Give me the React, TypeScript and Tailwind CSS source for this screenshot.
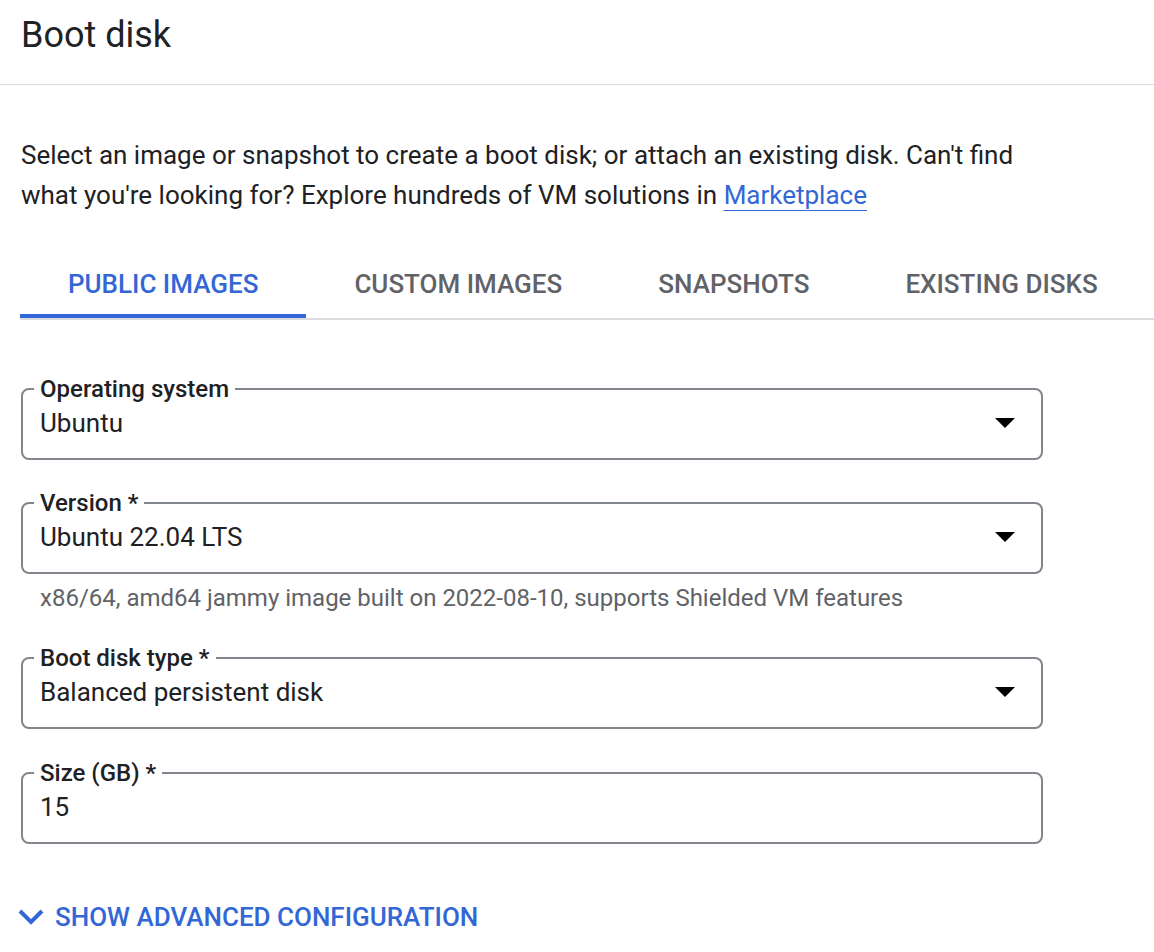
import React from 'react';

const BLUE = 'text-[#3367d6]';

// Outlined select/input with a notched label (fieldset + legend)
function OutlinedField({ label, value, select = true }: { label: string; value: string; select?: boolean }) {
  return (
    <fieldset className="w-[1022px] rounded-[8px] border-[2px] border-[#80868b] pl-[17px] pr-[26px] pb-[19px]">
      <legend className="ml-[-6px] px-[6px] text-[24px] leading-[24px] font-medium text-[#202124]">{label}</legend>
      <div className="mt-[6px] flex items-center justify-between">
        <span className="text-[26px] leading-[32px] text-[#202124]">{value}</span>
        {select && (
          <svg width="20" height="10" viewBox="0 0 20 10" className="shrink-0">
            <path d="M0 0 L20 0 L10 10 Z" fill="#000" />
          </svg>
        )}
      </div>
    </fieldset>
  );
}

export default function App() {
  const tabs = ['PUBLIC IMAGES', 'CUSTOM IMAGES', 'SNAPSHOTS', 'EXISTING DISKS'];
  return (
    <div className="min-h-[952px] w-[1154px] bg-white font-['Roboto',sans-serif] text-[#202124]">
      <div className="h-[85px] border-b border-[#dadce0] pl-[21px] pt-[13px]">
        <h1 className="text-[36px] leading-[44px] font-normal">Boot disk</h1>
      </div>

      <p className="mt-[50px] ml-[21px] w-[1030px] text-[26px] leading-[40px]">
        Select an image or snapshot to create a boot disk; or attach an existing disk. Can't find what you're looking for? Explore hundreds of VM solutions in{' '}
        <a className={`${BLUE} underline underline-offset-[6px] decoration-[1px]`}>Marketplace</a>
      </p>

      <div className="mt-[39px] ml-[20px] flex border-b-[2px] border-[#dadce0]">
        {tabs.map((t, i) => (
          <div
            key={t}
            className={
              i === 0
                ? 'flex h-[64px] items-center border-b-4 border-[#3367d6] px-[48px] text-[26px] font-medium text-[#3367d6]'
                : 'flex h-[64px] items-center border-b-4 border-transparent px-[48px] text-[26px] font-medium text-[#5f6368]'
            }
          >
            {t}
          </div>
        ))}
      </div>

      <div className="mt-[57px] ml-[21px] flex flex-col">
        <OutlinedField label="Operating system" value="Ubuntu" />
        <div className="mt-[31px]">
          <OutlinedField label="Version *" value="Ubuntu 22.04 LTS" />
        </div>
        <div className="mt-[12px] pl-[19px] text-[24px] leading-[24px] text-[#5f6368]">
          x86/64, amd64 jammy image built on 2022-08-10, supports Shielded VM features
        </div>
        <div className="mt-[36px]">
          <OutlinedField label="Boot disk type *" value="Balanced persistent disk" />
        </div>
        <div className="mt-[32px]">
          <OutlinedField label="Size (GB) *" value="15" select={false} />
        </div>
      </div>

      <div className={`mt-[57px] ml-[18px] flex items-center gap-[11px] ${BLUE}`}>
        <svg width="26" height="16" viewBox="0 0 26 16">
          <path d="M2 2 L13 13 L24 2" fill="none" stroke="#3367d6" strokeWidth="4" />
        </svg>
        <span className="text-[26px] leading-[32px] font-medium">SHOW ADVANCED CONFIGURATION</span>
      </div>
    </div>
  );
}
